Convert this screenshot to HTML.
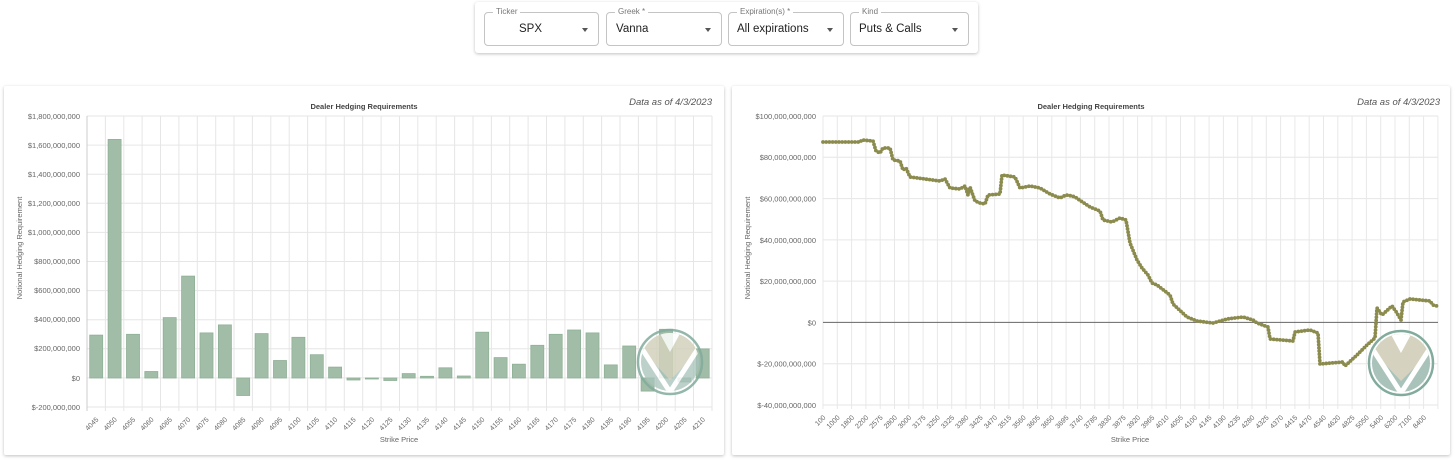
<!DOCTYPE html>
<html><head><meta charset="utf-8"><style>
html,body{margin:0;padding:0;background:#fff;width:1456px;height:462px;overflow:hidden;font-family:"Liberation Sans",sans-serif}
.top{position:absolute;left:475px;top:2px;width:503px;height:51px;background:#fff;box-shadow:0 1px 3px rgba(0,0,0,.25);border-radius:3px}
.f{position:absolute;top:10px;height:32px;border:1px solid #c4c4c4;border-radius:4px;font-size:11.5px;color:#222}
.f span.l{position:absolute;top:-6px;left:8px;background:#fff;padding:0 3px;font-size:8px;color:#777}
.f span.v{position:absolute;top:10px}
.f span.a{position:absolute;right:10px;top:15px;width:0;height:0;border-left:3.5px solid transparent;border-right:3.5px solid transparent;border-top:4px solid #555}
.panel{position:absolute;top:86px;height:369px;background:#fff;box-shadow:0 1px 3px rgba(0,0,0,.25);border-radius:2px}
svg text{font-family:"Liberation Sans",sans-serif}
</style></head><body>
<div class="top">
 <div class="f" style="left:9px;width:113px"><span class="l">Ticker</span><span class="v" style="left:34px">SPX</span><span class="a"></span></div>
 <div class="f" style="left:131px;width:114px"><span class="l">Greek *</span><span class="v" style="left:9px">Vanna</span><span class="a"></span></div>
 <div class="f" style="left:253px;width:114px"><span class="l">Expiration(s) *</span><span class="v" style="left:8px">All expirations</span><span class="a"></span></div>
 <div class="f" style="left:375px;width:117px"><span class="l">Kind</span><span class="v" style="left:8px">Puts &amp; Calls</span><span class="a"></span></div>
</div>
<div class="panel" style="left:4px;width:720px"></div>
<div class="panel" style="left:732px;width:718px"></div>
<svg width="1456" height="462" style="position:absolute;left:0;top:0">
<defs>
<clipPath id="c1"><circle cx="670" cy="362" r="29"/></clipPath>
<clipPath id="c2"><circle cx="1401" cy="363" r="29"/></clipPath>
</defs>
<!-- LEFT CHART -->
<g font-size="8" fill="#666">
<text x="364" y="109" text-anchor="middle" font-weight="bold" fill="#444" font-size="7.5">Dealer Hedging Requirements</text>
<text x="712" y="105" text-anchor="end" font-style="italic" font-size="9.5" fill="#555">Data as of 4/3/2023</text>
<g stroke="#e6e6e6" stroke-width="1">
<line x1="87" x2="712" y1="116" y2="116"/><line x1="87" x2="712" y1="145.1" y2="145.1"/><line x1="87" x2="712" y1="174.2" y2="174.2"/><line x1="87" x2="712" y1="203.3" y2="203.3"/><line x1="87" x2="712" y1="232.4" y2="232.4"/><line x1="87" x2="712" y1="261.5" y2="261.5"/><line x1="87" x2="712" y1="290.6" y2="290.6"/><line x1="87" x2="712" y1="319.7" y2="319.7"/><line x1="87" x2="712" y1="348.8" y2="348.8"/><line x1="87" x2="712" y1="377.9" y2="377.9"/><line x1="87" x2="712" y1="407" y2="407"/>
</g>
<g stroke="#e6e6e6">
<line x1="105.4" x2="105.4" y1="116" y2="411"/><line x1="123.8" x2="123.8" y1="116" y2="411"/><line x1="142.1" x2="142.1" y1="116" y2="411"/><line x1="160.5" x2="160.5" y1="116" y2="411"/><line x1="178.9" x2="178.9" y1="116" y2="411"/><line x1="197.3" x2="197.3" y1="116" y2="411"/><line x1="215.7" x2="215.7" y1="116" y2="411"/><line x1="234" x2="234" y1="116" y2="411"/><line x1="252.4" x2="252.4" y1="116" y2="411"/><line x1="270.8" x2="270.8" y1="116" y2="411"/><line x1="289.2" x2="289.2" y1="116" y2="411"/><line x1="307.6" x2="307.6" y1="116" y2="411"/><line x1="325.9" x2="325.9" y1="116" y2="411"/><line x1="344.3" x2="344.3" y1="116" y2="411"/><line x1="362.7" x2="362.7" y1="116" y2="411"/><line x1="381.1" x2="381.1" y1="116" y2="411"/><line x1="399.5" x2="399.5" y1="116" y2="411"/><line x1="417.8" x2="417.8" y1="116" y2="411"/><line x1="436.2" x2="436.2" y1="116" y2="411"/><line x1="454.6" x2="454.6" y1="116" y2="411"/><line x1="473" x2="473" y1="116" y2="411"/><line x1="491.4" x2="491.4" y1="116" y2="411"/><line x1="509.7" x2="509.7" y1="116" y2="411"/><line x1="528.1" x2="528.1" y1="116" y2="411"/><line x1="546.5" x2="546.5" y1="116" y2="411"/><line x1="564.9" x2="564.9" y1="116" y2="411"/><line x1="583.3" x2="583.3" y1="116" y2="411"/><line x1="601.6" x2="601.6" y1="116" y2="411"/><line x1="620" x2="620" y1="116" y2="411"/><line x1="638.4" x2="638.4" y1="116" y2="411"/><line x1="656.8" x2="656.8" y1="116" y2="411"/><line x1="675.2" x2="675.2" y1="116" y2="411"/><line x1="693.5" x2="693.5" y1="116" y2="411"/><line x1="712" x2="712" y1="116" y2="411"/>
<line x1="87" x2="87" y1="116" y2="411" stroke="#ccc"/>
</g>
<g text-anchor="end" font-size="7.5">
<text x="80" y="119">$1,800,000,000</text><text x="80" y="148">$1,600,000,000</text><text x="80" y="177">$1,400,000,000</text><text x="80" y="206">$1,200,000,000</text><text x="80" y="235">$1,000,000,000</text><text x="80" y="264">$800,000,000</text><text x="80" y="293">$600,000,000</text><text x="80" y="322">$400,000,000</text><text x="80" y="351">$200,000,000</text><text x="80" y="381">$0</text><text x="80" y="410">$-200,000,000</text>
</g>
<text transform="translate(22,248) rotate(-90)" text-anchor="middle" font-size="7.5">Notional Hedging Requirement</text>
<text x="399" y="442" text-anchor="middle" font-size="7.5">Strike Price</text>
<g fill="#a1bda7" stroke="#8fb096" stroke-width="0.8">
<rect x="89.7" y="335.1" width="13" height="42.9"/><rect x="108.1" y="139.4" width="13" height="238.6"/><rect x="126.5" y="334.3" width="13" height="43.7"/><rect x="144.8" y="371.5" width="13" height="6.5"/><rect x="163.2" y="317.6" width="13" height="60.4"/><rect x="181.6" y="276.1" width="13" height="101.9"/><rect x="200" y="332.9" width="13" height="45.1"/><rect x="218.4" y="324.9" width="13" height="53.1"/><rect x="236.7" y="378" width="13" height="17.5"/><rect x="255.1" y="333.6" width="13" height="44.4"/><rect x="273.5" y="360.5" width="13" height="17.5"/><rect x="291.9" y="337.3" width="13" height="40.7"/><rect x="310.3" y="354.7" width="13" height="23.3"/><rect x="328.6" y="367.1" width="13" height="10.9"/><rect x="347" y="378" width="13" height="2"/><rect x="365.4" y="378" width="13" height="1"/><rect x="383.8" y="378" width="13" height="2.5"/><rect x="402.2" y="373.6" width="13" height="4.4"/><rect x="420.5" y="376.3" width="13" height="1.7"/><rect x="438.9" y="367.8" width="13" height="10.2"/><rect x="457.3" y="376" width="13" height="2"/><rect x="475.7" y="332.2" width="13" height="45.8"/><rect x="494.1" y="357.6" width="13" height="20.4"/><rect x="512.4" y="364.2" width="13" height="13.8"/><rect x="530.8" y="345.3" width="13" height="32.7"/><rect x="549.2" y="334.3" width="13" height="43.7"/><rect x="567.6" y="330" width="13" height="48"/><rect x="586" y="332.9" width="13" height="45.1"/><rect x="604.3" y="364.9" width="13" height="13.1"/><rect x="622.7" y="346" width="13" height="32"/><rect x="641.1" y="378" width="13" height="13.1"/><rect x="659.5" y="329.3" width="13" height="48.7"/><rect x="677.9" y="378" width="13" height="4"/><rect x="696.2" y="348.9" width="13" height="29.1"/>
</g>
<g font-size="7" text-anchor="end">
<text transform="translate(99,420) rotate(-45)">4045</text><text transform="translate(117.4,420) rotate(-45)">4050</text><text transform="translate(135.8,420) rotate(-45)">4055</text><text transform="translate(154.1,420) rotate(-45)">4060</text><text transform="translate(172.5,420) rotate(-45)">4065</text><text transform="translate(190.9,420) rotate(-45)">4070</text><text transform="translate(209.3,420) rotate(-45)">4075</text><text transform="translate(227.7,420) rotate(-45)">4080</text><text transform="translate(246,420) rotate(-45)">4085</text><text transform="translate(264.4,420) rotate(-45)">4090</text><text transform="translate(282.8,420) rotate(-45)">4095</text><text transform="translate(301.2,420) rotate(-45)">4100</text><text transform="translate(319.6,420) rotate(-45)">4105</text><text transform="translate(337.9,420) rotate(-45)">4110</text><text transform="translate(356.3,420) rotate(-45)">4115</text><text transform="translate(374.7,420) rotate(-45)">4120</text><text transform="translate(393.1,420) rotate(-45)">4125</text><text transform="translate(411.5,420) rotate(-45)">4130</text><text transform="translate(429.8,420) rotate(-45)">4135</text><text transform="translate(448.2,420) rotate(-45)">4140</text><text transform="translate(466.6,420) rotate(-45)">4145</text><text transform="translate(485,420) rotate(-45)">4150</text><text transform="translate(503.4,420) rotate(-45)">4155</text><text transform="translate(521.7,420) rotate(-45)">4160</text><text transform="translate(540.1,420) rotate(-45)">4165</text><text transform="translate(558.5,420) rotate(-45)">4170</text><text transform="translate(576.9,420) rotate(-45)">4175</text><text transform="translate(595.3,420) rotate(-45)">4180</text><text transform="translate(613.6,420) rotate(-45)">4185</text><text transform="translate(632,420) rotate(-45)">4190</text><text transform="translate(650.4,420) rotate(-45)">4195</text><text transform="translate(668.8,420) rotate(-45)">4200</text><text transform="translate(687.2,420) rotate(-45)">4205</text><text transform="translate(705.5,420) rotate(-45)">4210</text>
</g>
</g>
<!-- left logo -->
<g opacity="0.85">
<circle cx="670" cy="362" r="32" fill="none" stroke="#82ab9d" stroke-width="2.5"/>
<g clip-path="url(#c1)">
<rect x="636" y="328" width="70" height="70" fill="#a9c3bb" opacity="0.9"/>
<polygon points="636,328 706,328 706,344 670,380 636,344" fill="#d3d1bb"/>
<polyline points="637,341 670,392 703,341" fill="none" stroke="#fff" stroke-width="5"/>
<polygon points="657,328 670,352 683,328" fill="#fff"/>
</g>
</g>
<!-- RIGHT CHART -->
<g font-size="8" fill="#666">
<text x="1091" y="109" text-anchor="middle" font-weight="bold" fill="#444" font-size="7.5">Dealer Hedging Requirements</text>
<text x="1440" y="105" text-anchor="end" font-style="italic" font-size="9.5" fill="#555">Data as of 4/3/2023</text>
<g stroke="#e6e6e6">
<line x1="823" x2="1438" y1="116" y2="116"/><line x1="823" x2="1438" y1="157.3" y2="157.3"/><line x1="823" x2="1438" y1="198.6" y2="198.6"/><line x1="823" x2="1438" y1="239.9" y2="239.9"/><line x1="823" x2="1438" y1="281.1" y2="281.1"/><line x1="823" x2="1438" y1="363.7" y2="363.7"/><line x1="823" x2="1438" y1="405" y2="405"/>
</g>
<g stroke="#e8e8e8" id="vg">
<line x1="823" x2="823" y1="116" y2="409"/><line x1="837.3" x2="837.3" y1="116" y2="409"/><line x1="851.6" x2="851.6" y1="116" y2="409"/><line x1="865.9" x2="865.9" y1="116" y2="409"/><line x1="880.2" x2="880.2" y1="116" y2="409"/><line x1="894.5" x2="894.5" y1="116" y2="409"/><line x1="908.8" x2="908.8" y1="116" y2="409"/><line x1="923.1" x2="923.1" y1="116" y2="409"/><line x1="937.4" x2="937.4" y1="116" y2="409"/><line x1="951.7" x2="951.7" y1="116" y2="409"/><line x1="966" x2="966" y1="116" y2="409"/><line x1="980.3" x2="980.3" y1="116" y2="409"/><line x1="994.6" x2="994.6" y1="116" y2="409"/><line x1="1008.9" x2="1008.9" y1="116" y2="409"/><line x1="1023.2" x2="1023.2" y1="116" y2="409"/><line x1="1037.5" x2="1037.5" y1="116" y2="409"/><line x1="1051.8" x2="1051.8" y1="116" y2="409"/><line x1="1066.1" x2="1066.1" y1="116" y2="409"/><line x1="1080.4" x2="1080.4" y1="116" y2="409"/><line x1="1094.7" x2="1094.7" y1="116" y2="409"/><line x1="1109" x2="1109" y1="116" y2="409"/><line x1="1123.3" x2="1123.3" y1="116" y2="409"/><line x1="1137.6" x2="1137.6" y1="116" y2="409"/><line x1="1151.9" x2="1151.9" y1="116" y2="409"/><line x1="1166.2" x2="1166.2" y1="116" y2="409"/><line x1="1180.5" x2="1180.5" y1="116" y2="409"/><line x1="1194.8" x2="1194.8" y1="116" y2="409"/><line x1="1209.1" x2="1209.1" y1="116" y2="409"/><line x1="1223.4" x2="1223.4" y1="116" y2="409"/><line x1="1237.7" x2="1237.7" y1="116" y2="409"/><line x1="1252" x2="1252" y1="116" y2="409"/><line x1="1266.3" x2="1266.3" y1="116" y2="409"/><line x1="1280.6" x2="1280.6" y1="116" y2="409"/><line x1="1294.9" x2="1294.9" y1="116" y2="409"/><line x1="1309.2" x2="1309.2" y1="116" y2="409"/><line x1="1323.5" x2="1323.5" y1="116" y2="409"/><line x1="1337.8" x2="1337.8" y1="116" y2="409"/><line x1="1352.1" x2="1352.1" y1="116" y2="409"/><line x1="1366.4" x2="1366.4" y1="116" y2="409"/><line x1="1380.7" x2="1380.7" y1="116" y2="409"/><line x1="1395" x2="1395" y1="116" y2="409"/><line x1="1409.3" x2="1409.3" y1="116" y2="409"/><line x1="1423.6" x2="1423.6" y1="116" y2="409"/><line x1="1437.9" x2="1437.9" y1="116" y2="409"/>
</g>
<line x1="823" x2="1438" y1="322.4" y2="322.4" stroke="#666" stroke-width="1"/>
<g text-anchor="end" font-size="7.5">
<text x="816" y="119">$100,000,000,000</text><text x="816" y="160">$80,000,000,000</text><text x="816" y="201.6">$60,000,000,000</text><text x="816" y="243">$40,000,000,000</text><text x="816" y="284">$20,000,000,000</text><text x="816" y="325.4">$0</text><text x="816" y="366.7">$-20,000,000,000</text><text x="816" y="408">$-40,000,000,000</text>
</g>
<text transform="translate(750,248) rotate(-90)" text-anchor="middle" font-size="7.5">Notional Hedging Requirement</text>
<text x="1130" y="442" text-anchor="middle" font-size="7.5">Strike Price</text>
<polyline fill="none" stroke="#d8d8d8" stroke-width="0.8" points="823,142 860,142 862,140 873,141 876,151 880,153 883,148 890,148 893,160 900,161 903,170 906,168 910,177 925,179 940,181 945,179 950,188 960,189 965,186 968,195 970,187 975,201 980,203 985,204 988,195 1000,194 1002,175 1015,177 1020,188 1030,186 1040,188 1050,194 1060,198 1066,195 1072,196 1075,197 1090,207 1100,211 1103,220 1112,222 1120,218 1126,220 1130,243 1137,260 1142,268 1148,275 1152,283 1157,285 1170,295 1173,304 1187,317 1197,321 1213,323 1227,319 1243,317 1253,320 1257,323 1268,327 1270,339 1293,341 1295,332 1310,330 1318,333 1320,364 1343,362 1345,366 1357,355 1367,345 1375,338 1377,308 1382,315 1392,306 1397,313 1401,320 1403,302 1410,299 1430,301 1433,305 1437,306"/>
<polyline fill="none" stroke="#8b8b4e" stroke-width="3.8" stroke-linecap="round" stroke-dasharray="0 3.2" points="823,142 860,142 862,140 873,141 876,151 880,153 883,148 890,148 893,160 900,161 903,170 906,168 910,177 925,179 940,181 945,179 950,188 960,189 965,186 968,195 970,187 975,201 980,203 985,204 988,195 1000,194 1002,175 1015,177 1020,188 1030,186 1040,188 1050,194 1060,198 1066,195 1072,196 1075,197 1090,207 1100,211 1103,220 1112,222 1120,218 1126,220 1130,243 1137,260 1142,268 1148,275 1152,283 1157,285 1170,295 1173,304 1187,317 1197,321 1213,323 1227,319 1243,317 1253,320 1257,323 1268,327 1270,339 1293,341 1295,332 1310,330 1318,333 1320,364 1343,362 1345,366 1357,355 1367,345 1375,338 1377,308 1382,315 1392,306 1397,313 1401,320 1403,302 1410,299 1430,301 1433,305 1437,306"/>
<g font-size="7" text-anchor="end">
<text transform="translate(826,418) rotate(-45)">100</text><text transform="translate(840.3,418) rotate(-45)">1000</text><text transform="translate(854.6,418) rotate(-45)">1800</text><text transform="translate(868.9,418) rotate(-45)">2200</text><text transform="translate(883.2,418) rotate(-45)">2575</text><text transform="translate(897.5,418) rotate(-45)">2800</text><text transform="translate(911.8,418) rotate(-45)">3000</text><text transform="translate(926.1,418) rotate(-45)">3175</text><text transform="translate(940.4,418) rotate(-45)">3250</text><text transform="translate(954.7,418) rotate(-45)">3325</text><text transform="translate(969,418) rotate(-45)">3380</text><text transform="translate(983.3,418) rotate(-45)">3425</text><text transform="translate(997.6,418) rotate(-45)">3470</text><text transform="translate(1011.9,418) rotate(-45)">3515</text><text transform="translate(1026.2,418) rotate(-45)">3560</text><text transform="translate(1040.5,418) rotate(-45)">3605</text><text transform="translate(1054.8,418) rotate(-45)">3650</text><text transform="translate(1069.1,418) rotate(-45)">3695</text><text transform="translate(1083.4,418) rotate(-45)">3740</text><text transform="translate(1097.7,418) rotate(-45)">3785</text><text transform="translate(1112,418) rotate(-45)">3830</text><text transform="translate(1126.3,418) rotate(-45)">3875</text><text transform="translate(1140.6,418) rotate(-45)">3920</text><text transform="translate(1154.9,418) rotate(-45)">3965</text><text transform="translate(1169.2,418) rotate(-45)">4010</text><text transform="translate(1183.5,418) rotate(-45)">4055</text><text transform="translate(1197.8,418) rotate(-45)">4100</text><text transform="translate(1212.1,418) rotate(-45)">4145</text><text transform="translate(1226.4,418) rotate(-45)">4190</text><text transform="translate(1240.7,418) rotate(-45)">4235</text><text transform="translate(1255,418) rotate(-45)">4280</text><text transform="translate(1269.3,418) rotate(-45)">4325</text><text transform="translate(1283.6,418) rotate(-45)">4370</text><text transform="translate(1297.9,418) rotate(-45)">4415</text><text transform="translate(1312.2,418) rotate(-45)">4470</text><text transform="translate(1326.5,418) rotate(-45)">4540</text><text transform="translate(1340.8,418) rotate(-45)">4620</text><text transform="translate(1355.1,418) rotate(-45)">4825</text><text transform="translate(1369.4,418) rotate(-45)">5050</text><text transform="translate(1383.7,418) rotate(-45)">5400</text><text transform="translate(1398,418) rotate(-45)">6200</text><text transform="translate(1412.3,418) rotate(-45)">7100</text><text transform="translate(1426.6,418) rotate(-45)">8400</text>
</g>
</g>
<!-- right logo -->
<g>
<circle cx="1401" cy="363" r="32" fill="#fff" fill-opacity="0.3" stroke="#82ab9d" stroke-width="2.5"/>
<g clip-path="url(#c2)">
<rect x="1367" y="329" width="70" height="70" fill="#a9c3bb"/>
<polygon points="1367,329 1437,329 1437,345 1401,381 1367,345" fill="#d5d3bf"/>
<polyline points="1368,342 1401,393 1434,342" fill="none" stroke="#fff" stroke-width="5"/>
<polygon points="1388,329 1401,353 1414,329" fill="#fff"/>
</g>
</g>
</svg>
</body></html>
